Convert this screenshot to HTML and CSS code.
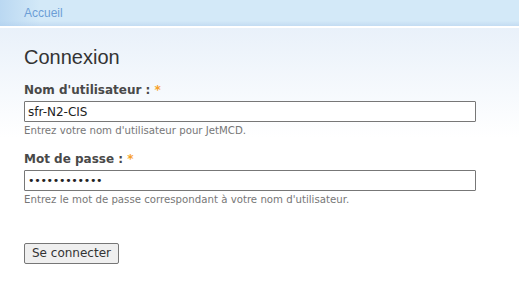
FILE: index.html
```html
<!DOCTYPE html>
<html lang="fr">
<head>
    <meta charset="UTF-8">
    <title>Connexion</title>
    <link rel="stylesheet" href="styles.css">
</head>
<body>
    <div class="breadcrumb">
        <a href="#">Accueil</a>
    </div>

    <div class="content">
        <h1>Connexion</h1>

        <form class="login-form">
            <div class="form-item">
                <label for="edit-name">Nom d'utilisateur : <span class="required">*</span></label>
                <input type="text" id="edit-name" class="form-text" value="sfr-N2-CIS">
                <div class="description">Entrez votre nom d'utilisateur pour JetMCD.</div>
            </div>

            <div class="form-item">
                <label for="edit-pass">Mot de passe : <span class="required">*</span></label>
                <input type="password" id="edit-pass" class="form-text pass" value="xxxxxxxxxxxx">
                <div class="description">Entrez le mot de passe correspondant à votre nom d'utilisateur.</div>
            </div>

            <div class="form-actions">
                <button type="button" class="form-submit">Se connecter</button>
            </div>
        </form>
    </div>
</body>
</html>
```

FILE: styles.css
```css
* {
    margin: 0;
    padding: 0;
    box-sizing: border-box;
}

body {
    font-family: Verdana, "DejaVu Sans", sans-serif;
    background: #fff;
    color: #333;
}

.breadcrumb {
    height: 28px;
    padding: 6px 24px 0;
    background: linear-gradient(180deg, #d3e9f8 0%, #d3e9f8 80%, #c3dcf2 100%);
    border-bottom: 2px solid #fff;
    font-family: "Liberation Sans", Arial, sans-serif;
    font-size: 12px;
    position: relative;
}

.breadcrumb::before {
    content: '';
    position: absolute;
    top: 0;
    left: 0;
    width: 40px;
    height: 26px;
    background: linear-gradient(90deg, rgba(170, 205, 238, 0.6), rgba(211, 233, 248, 0));
}

.breadcrumb a {
    color: #6c9ed6;
    text-decoration: none;
    position: relative;
}

.content {
    padding: 18px 24px 30px;
    background: linear-gradient(180deg, #e9f1fa 0px, #ffffff 110px);
    min-height: 266px;
}

h1 {
    font-family: "Liberation Sans", Arial, sans-serif;
    font-weight: normal;
    font-size: 20px;
    color: #333;
    margin-bottom: 14px;
}

.form-item {
    margin-bottom: 16px;
}

.form-item label {
    display: block;
    font-weight: bold;
    font-size: 12px;
    color: #494949;
    margin-bottom: 4px;
}

.required {
    color: #f7a128;
}

.form-text {
    display: block;
    width: 452px;
    height: 21px;
    border: 1px solid #777;
    border-radius: 1px;
    padding: 0 3px;
    font-family: Verdana, "DejaVu Sans", sans-serif;
    font-size: 12px;
    color: #222;
    background: #fff;
}

.form-text.pass {
    font-size: 11px;
    letter-spacing: -0.3px;
}

.description {
    font-size: 10.2px;
    color: #777;
    margin-top: 3px;
}

.form-actions {
    padding-top: 21px;
}

.form-submit {
    font-family: Verdana, "DejaVu Sans", sans-serif;
    font-size: 12px;
    color: #333;
    height: 21px;
    padding: 0 7px;
    background: #efefef;
    border: 1px solid #767676;
    border-radius: 2px;
}
```
